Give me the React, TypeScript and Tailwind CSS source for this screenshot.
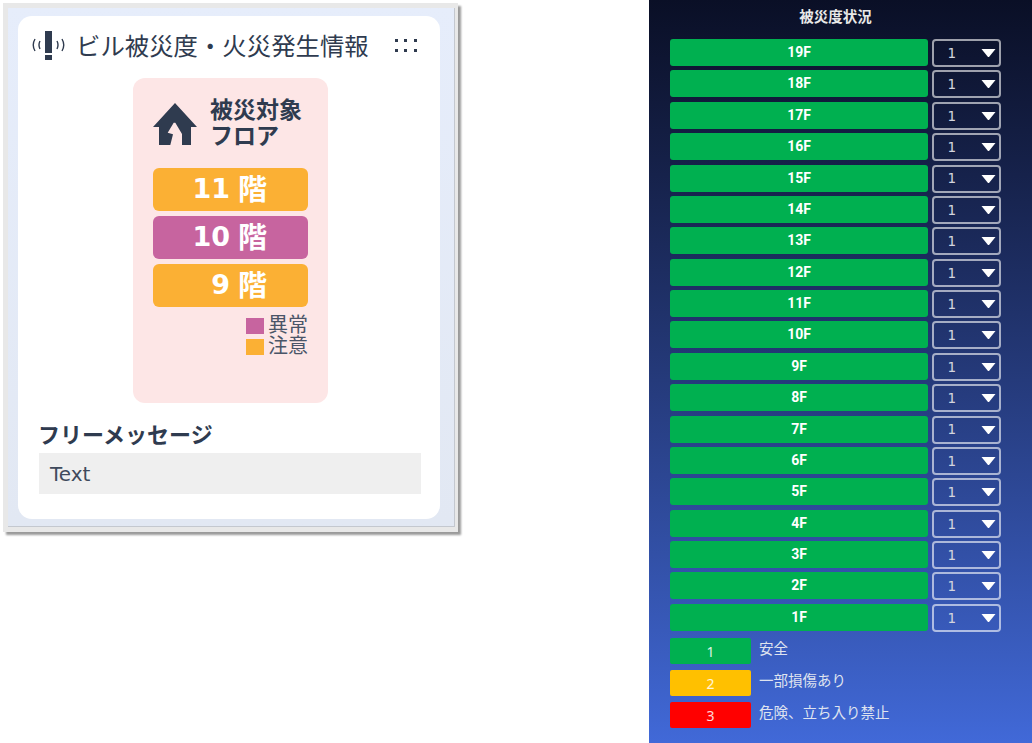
const jp = "font-['DejaVu_Sans','Noto_Sans_CJK_JP',sans-serif]";
const cjk = "font-['Noto_Sans_CJK_JP',sans-serif]";

const floors = ["19F", "18F", "17F", "16F", "15F", "14F", "13F", "12F", "11F", "10F", "9F", "8F", "7F", "6F", "5F", "4F", "3F", "2F", "1F"];

const legend = [
  { no: "1", label: "安全", color: "bg-[#00b050]" },
  { no: "2", label: "一部損傷あり", color: "bg-[#ffc000]" },
  { no: "3", label: "危険、立ち入り禁止", color: "bg-[#ff0000]" },
];

function AlertIcon() {
  return (
    <svg width="34" height="32" viewBox="0 0 34 32" className="shrink-0">
      <rect x="13" y="1" width="7" height="22" fill="#2f3b4f" />
      <rect x="13" y="25" width="7" height="5" fill="#2f3b4f" />
      <path d="M3 9 Q-0.5 15 3 21 M8 11 Q6 15 8 19 M25 11 Q27 15 25 19 M30 9 Q33.5 15 30 21" fill="none" stroke="#2f3b4f" strokeWidth="1.4" />
    </svg>
  );
}

function HouseIcon() {
  return (
    <svg width="44" height="43" viewBox="0 0 44 43" className="shrink-0">
      <path
        fill="#2f3b4f"
        d="M22 0 L44 24 H38 V42 H29 V31 L22.3 19.7 H20.7 L14.7 29.7 L20 31.3 L17.3 42 H6 V24 H0 Z"
      />
    </svg>
  );
}

function FloorTag({ no, color }: { no: string; color: string }) {
  return (
    <div className={`flex h-[43px] items-center justify-end rounded-[6px] pr-[41px] font-bold text-white ${color}`}>
      <span className="text-[27px]">{no}</span>
      <span className={`ml-[8px] pb-[4px] text-[29px] leading-none ${cjk}`}>階</span>
    </div>
  );
}

function LeftCard() {
  return (
    <div className="mt-[3px] ml-[3px] h-[529px] w-[455px] bg-[#e8e8e8] pt-[5px] pl-[5px] shadow-[3px_3px_2px_#9a9a9a]">
      <div className="h-[519px] w-[447px] border-r border-b border-[#c4c8cf] bg-gradient-to-b from-[#e6edfb] to-[#e2e8f3] pt-[8px] pl-[10px]">
        <div className={`h-[503px] w-[422px] rounded-[14px] bg-white pt-[14px] text-[#2f3b4f] ${jp}`}>
          <div className="flex h-[32px] items-center pl-[14px]">
            <AlertIcon />
            <span className={`mb-[2px] ml-[10px] text-[24.4px] leading-none font-normal whitespace-nowrap ${cjk}`}>ビル被災度・火災発生情報</span>
            <span className="mb-[2px] ml-[26px] grid grid-cols-3 gap-x-[6.5px] gap-y-[7px]">
              {[0, 1, 2, 3, 4, 5].map((i) => (
                <span key={i} className="h-[3px] w-[3px] bg-[#2f3b4f]" />
              ))}
            </span>
          </div>
          <div className="mt-[16px] ml-[115px] h-[325px] w-[195px] rounded-[12px] bg-[#fde6e6] px-[20px] pt-[20px]">
            <div className="flex h-[52px] items-center gap-[13px]">
              <HouseIcon />
              <div className={`-mt-[6px] text-[23px] leading-[26px] font-bold whitespace-nowrap ${cjk}`}>
                被災対象
                <br />
                フロア
              </div>
            </div>
            <div className="mt-[18px] flex flex-col gap-[5px]">
              <FloorTag no="11" color="bg-[#fbb034]" />
              <FloorTag no="10" color="bg-[#c7649f]" />
              <FloorTag no="9" color="bg-[#fbb034]" />
            </div>
            <div className={`mt-[8px] flex flex-col items-end text-[20px] leading-[21px] text-[#4a5568] ${cjk}`}>
              <div className="flex h-[21px] items-center gap-[4px]">
                <span className="h-[16px] w-[18px] bg-[#c7649f]" />
                <span className="pb-[4px]">異常</span>
              </div>
              <div className="flex h-[21px] items-center gap-[4px]">
                <span className="h-[16px] w-[18px] bg-[#fbb034]" />
                <span className="pb-[4px]">注意</span>
              </div>
            </div>
          </div>
          <div className={`mt-[16px] ml-[20px] text-[22px] leading-[28px] font-bold ${cjk}`}>フリーメッセージ</div>
          <div className="mt-[6px] ml-[21px] flex h-[41px] w-[382px] items-center bg-[#efefef] pl-[11px] text-[20px] text-[#3f4a5c]">Text</div>
        </div>
      </div>
    </div>
  );
}

function FloorRow({ name }: { name: string }) {
  return (
    <div className="flex h-[28px] gap-[4px]">
      <div className="flex h-[27px] w-[258px] items-center justify-center rounded-[3px] bg-[#00b050] font-['Roboto',sans-serif] text-[14px] font-bold text-white">{name}</div>
      <div className="flex h-[28px] w-[69px] items-center justify-between rounded-[4px] border-2 border-white/60 pr-[3px] pl-[13.5px] font-['DejaVu_Sans',sans-serif] text-[13.5px] text-[#d3d5de]">
        <span>1</span>
        <svg width="15" height="8" viewBox="0 0 15 8">
          <path d="M0.5 0 H14.5 L8 8 H7 Z" fill="#fff" />
        </svg>
      </div>
    </div>
  );
}

function RightPanel() {
  return (
    <div className="ml-[191px] flex h-[743px] w-[383px] flex-col bg-gradient-to-b from-[#0a0f26] to-[#4169d8] pl-[21px] font-['Noto_Sans','Noto_Sans_CJK_JP',sans-serif]">
      <div className="mt-[7px] h-[18px] w-[331px] text-center text-[14.5px] leading-[18px] font-bold text-[#e8e8e8]">被災度状況</div>
      <div className="mt-[14px] flex h-[593px] flex-col justify-between">
        {floors.map((f) => (
          <FloorRow key={f} name={f} />
        ))}
      </div>
      <div className="mt-[6px] flex flex-col gap-[6px]">
        {legend.map((l) => (
          <div key={l.no} className="flex h-[26px] gap-[8px]">
            <div className={`flex w-[81px] items-center justify-center rounded-[2px] pt-[1px] text-[14px] text-white/85 ${l.color}`}>{l.no}</div>
            <div className="text-[14.5px] leading-[20px] text-[#dfe3ef]">{l.label}</div>
          </div>
        ))}
      </div>
    </div>
  );
}

export default function App() {
  return (
    <div className="flex h-[743px] w-[1032px] items-start overflow-hidden bg-white">
      <LeftCard />
      <RightPanel />
    </div>
  );
}
